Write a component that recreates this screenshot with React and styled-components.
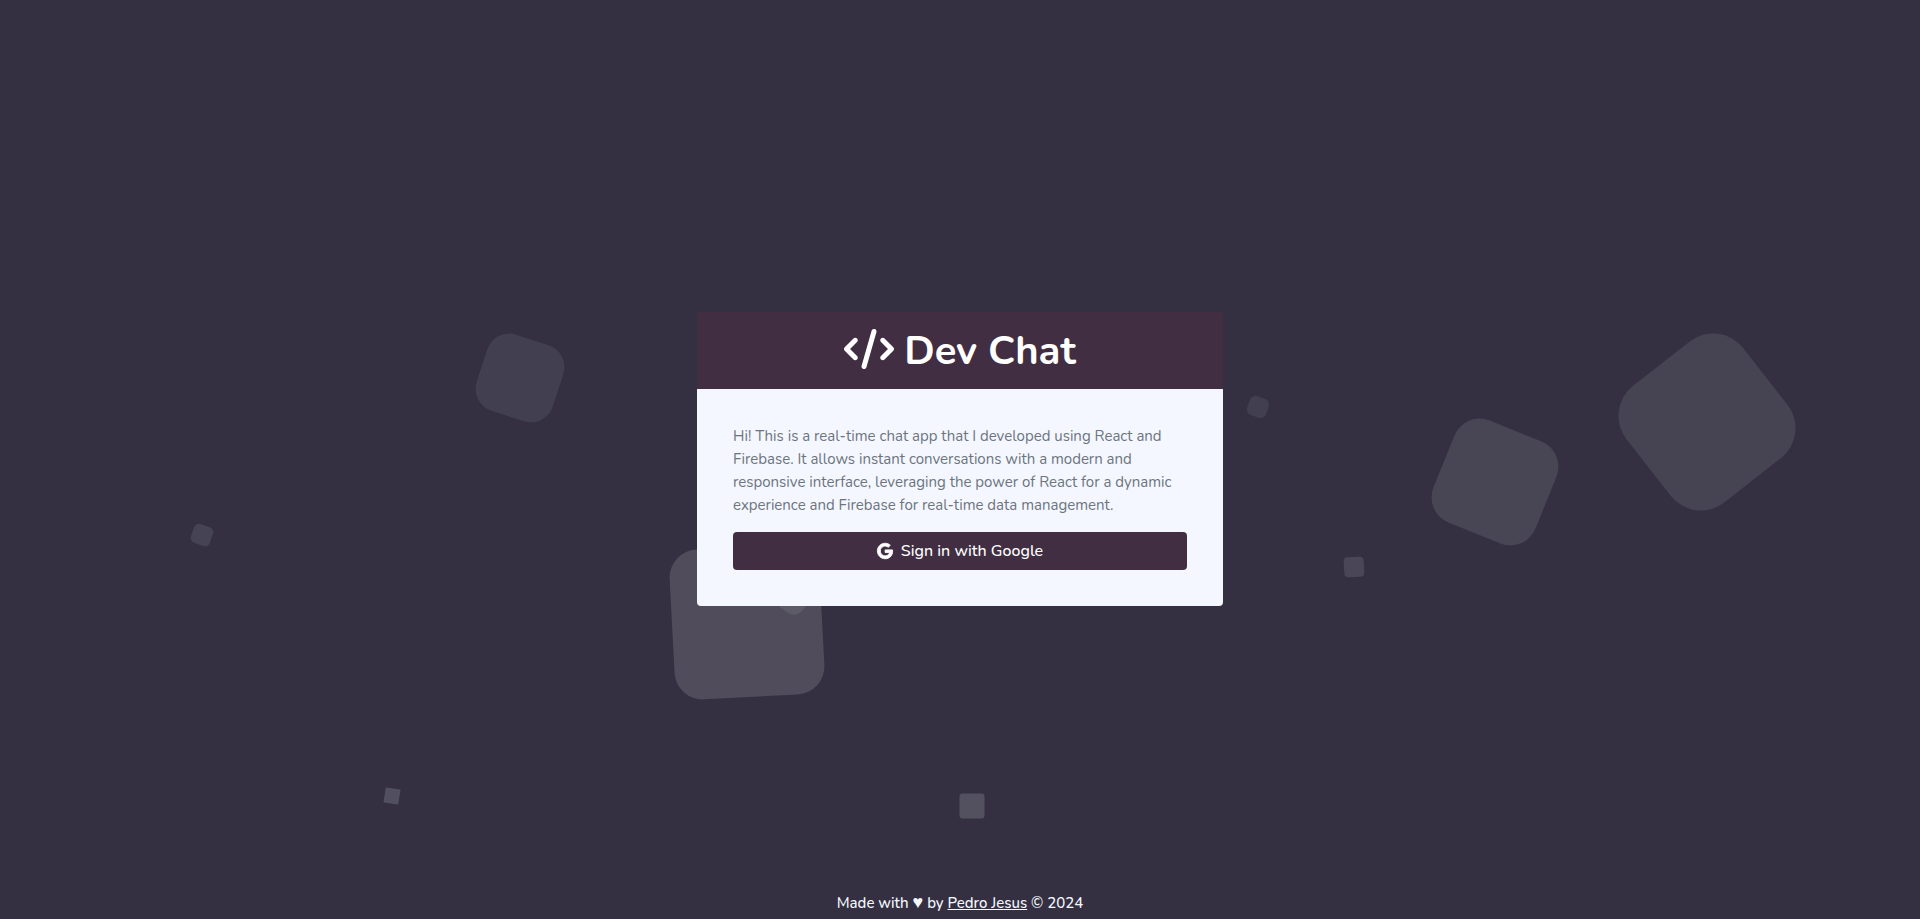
import React from "react";
import styled, { createGlobalStyle } from "styled-components";
import { FaCode } from "react-icons/fa6";
import { FaGoogle } from "react-icons/fa";

const GlobalStyle = createGlobalStyle`
  *, *::before, *::after { box-sizing: border-box; }
  body {
    margin: 0;
    background: #343042;
    color: #f5f8ff;
    font-family: Nunito, Lato, "Open Sans", sans-serif;
    font-size: 15px;
    line-height: 23px;
  }
`;

const Page = styled.div`
  position: relative;
  min-height: 100vh;
  padding-bottom: 1px;
  display: grid;
  grid-template-rows: 1fr auto 1fr;
  justify-items: center;
  overflow: hidden;
`;

const Backdrop = styled.div`
  position: absolute;
  inset: 0;
`;

const Bubble = styled.span`
  position: absolute;
  left: ${(p) => p.$x}%;
  top: ${(p) => p.$y}%;
  width: ${(p) => p.$size}px;
  height: ${(p) => p.$size}px;
  border-radius: ${(p) => p.$radius}px;
  background: ${(p) => p.$color};
  transform: translate(-50%, -50%) rotate(${(p) => p.$turn}deg);
`;

const Card = styled.main`
  position: relative;
  grid-row: 2;
  width: 526px;
  max-width: 100%;
  border-radius: 4px;
  overflow: hidden;
`;

const CardHeader = styled.header`
  display: flex;
  align-items: center;
  justify-content: center;
  gap: 10px;
  height: 77px;
  background: #412e43;
  color: #ffffff;
`;

const CodeIcon = styled(FaCode)`
  width: 50px;
  height: 44px;
  padding-bottom: 4px;
`;

const Title = styled.h1`
  margin: 0;
  font-size: 40px;
  line-height: 48px;
  font-weight: 700;
`;

const CardBody = styled.div`
  display: flex;
  flex-direction: column;
  gap: 15px;
  padding: 36px;
  background: #f4f7ff;
`;

const Intro = styled.p`
  margin: 0;
  color: #6c757d;
`;

const SignInButton = styled.button`
  display: flex;
  align-items: center;
  justify-content: center;
  gap: 8px;
  height: 38px;
  border: 0;
  border-radius: 4px;
  background: #412e43;
  color: #ffffff;
  font: inherit;
  font-size: 16px;
  font-weight: 500;
  cursor: pointer;
`;

const GoogleIcon = styled(FaGoogle)`
  stroke-width: 28px;
  overflow: visible;
`;

const Footer = styled.footer`
  position: relative;
  grid-row: 3;
  align-self: end;
  padding-bottom: 3px;
  font-weight: 500;
`;

const Heart = styled.span`
  font-size: 18px;
  line-height: 1;
`;

const AuthorLink = styled.a`
  color: inherit;
  text-decoration: underline;
`;

const bubbles = [
  { x: 27.1, y: 41.1, size: 80, radius: 23, turn: 18, color: "#413f50" },
  { x: 38.9, y: 67.7, size: 150, radius: 28, turn: -3, color: "#504c5b" },
  { x: 41.3, y: 65.1, size: 30, radius: 11, turn: 36, color: "#5e5b68" },
  { x: 88.9, y: 45.9, size: 148, radius: 38, turn: -38, color: "#464453" },
  { x: 77.85, y: 52.5, size: 110, radius: 27, turn: 22, color: "#484554" },
  { x: 65.5, y: 44.3, size: 20, radius: 6, turn: 20, color: "#413f50" },
  { x: 70.5, y: 61.7, size: 20, radius: 4, turn: -3, color: "#4a4658" },
  { x: 10.5, y: 58.2, size: 20, radius: 5, turn: 19, color: "#454354" },
  { x: 20.4, y: 86.6, size: 15, radius: 1, turn: 9, color: "#525060" },
  { x: 50.65, y: 87.65, size: 25, radius: 3, turn: 0, color: "#53505f" },
];

export default function App() {
  return (
    <>
      <GlobalStyle />
      <Page>
        <Backdrop aria-hidden="true">
          {bubbles.map((b, i) => (
            <Bubble
              key={i}
              $x={b.x}
              $y={b.y}
              $size={b.size}
              $radius={b.radius}
              $turn={b.turn}
              $color={b.color}
            />
          ))}
        </Backdrop>
        <Card>
          <CardHeader>
            <CodeIcon />
            <Title>Dev Chat</Title>
          </CardHeader>
          <CardBody>
            <Intro>
              Hi! This is a real-time chat app that I developed using React and
              Firebase. It allows instant conversations with a modern and
              responsive interface, leveraging the power of React for a dynamic
              experience and Firebase for real-time data management.
            </Intro>
            <SignInButton type="button">
              <GoogleIcon />
              Sign in with Google
            </SignInButton>
          </CardBody>
        </Card>
        <Footer>
          Made with <Heart>♥</Heart> by{" "}
          <AuthorLink href="#">Pedro Jesus</AuthorLink> © 2024
        </Footer>
      </Page>
    </>
  );
}
